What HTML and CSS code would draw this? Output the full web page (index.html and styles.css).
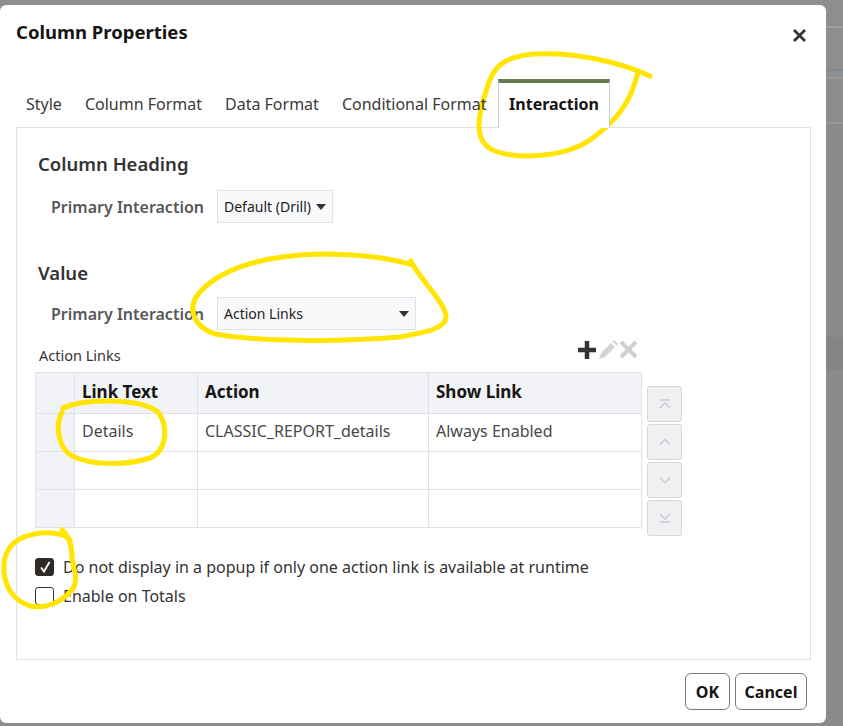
FILE: index.html
```html
<!DOCTYPE html>
<html>
<head>
<meta charset="utf-8">
<title>Column Properties</title>
<link rel="stylesheet" href="styles.css">
</head>
<body>
<div class="page">
  <div class="dialog">
    <div class="dlg-header">
      <h1 class="dlg-title">Column Properties</h1>
      <button class="close-btn" aria-label="Close">
        <svg width="13" height="13" viewBox="0 0 13 13"><path d="M1 1 L12 12 M12 1 L1 12" stroke="#333" stroke-width="2.8" fill="none"/></svg>
      </button>
    </div>

    <div class="tabs">
      <div class="tab">Style</div>
      <div class="tab">Column Format</div>
      <div class="tab">Data Format</div>
      <div class="tab">Conditional Format</div>
      <div class="tab active">Interaction</div>
    </div>

    <div class="panel">
      <h2 class="section-title">Column Heading</h2>
      <div class="field-row">
        <span class="field-label">Primary Interaction</span>
        <div class="select select-short"><span>Default (Drill)</span><span class="caret"></span></div>
      </div>

      <h2 class="section-title section-value">Value</h2>
      <div class="field-row field-row-value">
        <span class="field-label">Primary Interaction</span>
        <div class="select select-long"><span>Action Links</span><span class="caret"></span></div>
      </div>

      <div class="links-head">
        <span class="links-label">Action Links</span>
        <div class="toolbar">
          <svg width="22" height="20" viewBox="0 0 22 20"><path d="M11 1 V19 M2 10 H20" stroke="#333" stroke-width="4.5" fill="none"/></svg>
          <svg width="21" height="20" viewBox="0 0 21 20"><path d="M1 19 L3 13 L13 3 L17 7 L7 17 Z M14.5 1.5 L16 0 L20 4 L18.5 5.5 Z" fill="#d4d4d4"/></svg>
          <svg width="19" height="20" viewBox="0 0 19 20"><path d="M2 2 L17 17 M17 2 L2 17" stroke="#cfcfcf" stroke-width="4" fill="none"/></svg>
        </div>
      </div>

      <div class="links-body">
        <table class="links-table">
          <colgroup><col class="c-rh"><col class="c-text"><col class="c-action"><col class="c-show"></colgroup>
          <thead>
            <tr><th class="rh"></th><th>Link Text</th><th>Action</th><th>Show Link</th></tr>
          </thead>
          <tbody>
            <tr><td class="rh"></td><td>Details</td><td>CLASSIC_REPORT_details</td><td>Always Enabled</td></tr>
            <tr><td class="rh"></td><td></td><td></td><td></td></tr>
            <tr><td class="rh"></td><td></td><td></td><td></td></tr>
          </tbody>
        </table>
        <div class="order-btns">
          <button class="order-btn" aria-label="Move to top"><svg width="12" height="10" viewBox="0 0 12 10"><path d="M1 1 H11 M1 9 L6 4 L11 9" stroke="#c6cacf" stroke-width="1.3" fill="none"/></svg></button>
          <button class="order-btn" aria-label="Move up"><svg width="12" height="8" viewBox="0 0 12 8"><path d="M1 6.5 L6 1.5 L11 6.5" stroke="#c6cacf" stroke-width="1.3" fill="none"/></svg></button>
          <button class="order-btn" aria-label="Move down"><svg width="12" height="8" viewBox="0 0 12 8"><path d="M1 1.5 L6 6.5 L11 1.5" stroke="#c6cacf" stroke-width="1.3" fill="none"/></svg></button>
          <button class="order-btn" aria-label="Move to bottom"><svg width="12" height="10" viewBox="0 0 12 10"><path d="M1 1 L6 6 L11 1 M1 9 H11" stroke="#c6cacf" stroke-width="1.3" fill="none"/></svg></button>
        </div>
      </div>

      <div class="checks">
        <label class="check-row">
          <span class="cbox checked"><svg width="16" height="16" viewBox="0 0 16 16"><path d="M4 8.5 L7 12.5 L12.5 3" stroke="#fff" stroke-width="1.8" fill="none"/></svg></span>
          <span>Do not display in a popup if only one action link is available at runtime</span>
        </label>
        <label class="check-row">
          <span class="cbox"></span>
          <span>Enable on Totals</span>
        </label>
      </div>
    </div>

    <div class="dlg-footer">
      <button class="btn btn-ok">OK</button>
      <button class="btn btn-cancel">Cancel</button>
    </div>
  </div>
</div>

<svg class="annotations" viewBox="0 0 843 726" width="843" height="726">
  <g fill="none" stroke="#ffe500" stroke-width="5" stroke-linecap="round" stroke-linejoin="round">
    <path d="M650 76 C620 62 575 52 535 54 C505 56 493 66 487 88 C478 115 472 142 495 151 C520 160 565 157 590 140 C615 122 630 105 638 72"/>
    <path d="M411 261 L413 265 C425 285 447 305 446 318 C444 330 420 333 400 337 C340 342 260 342 215 334 C190 325 188 305 200 292 C220 270 260 256 320 254 C360 254 390 258 413 265"/>
    <path d="M63 408 C85 398 140 398 158 412 C168 425 168 450 150 458 C125 466 90 465 72 456 C58 448 55 425 62 412"/>
    <path d="M62 530 C70 537 72 548 72 558 C74 572 80 582 70 592 C60 603 45 609 30 606 C12 600 3 585 4 565 C5 545 18 536 40 533 C55 532 65 534 70 540"/>
  </g>
</svg>
</body>
</html>
```

FILE: styles.css
```css
* { box-sizing: border-box; }

html, body {
  margin: 0;
  height: 100%;
}

body {
  position: relative;
  overflow: hidden;
  font-family: "Noto Sans", "Open Sans", sans-serif;
  color: #333;
  background: linear-gradient(to bottom,
    #8e8e8e 0, #8e8e8e 26px, #a0a0a0 26px, #a0a0a0 28px,
    #8e8e8e 28px, #8e8e8e 69px, #7e8898 69px, #7e8898 71px,
    #8e8e8e 71px, #8e8e8e 77px, #9a9a9a 77px, #9a9a9a 79px,
    #8c8c8c 79px, #8c8c8c 122px, #999 122px, #999 124px,
    #8b8b8b 124px, #8b8b8b 337px, #858585 337px, #858585 370px,
    #8b8b8b 370px);
}

.page {
  padding-top: 5px;
}

.dialog {
  width: 826px;
  height: 718px;
  background: #fff;
  border-radius: 6px;
  padding: 0 15px 0 16px;
  display: flex;
  flex-direction: column;
}

/* header */
.dlg-header {
  height: 74px;
  display: flex;
  justify-content: space-between;
  align-items: flex-start;
  padding-top: 15px;
}

.dlg-title {
  margin: 0;
  font-size: 18.5px;
  line-height: 24px;
  font-weight: 700;
  color: #161513;
}

.close-btn {
  display: block;
  border: 0;
  background: none;
  padding: 0;
  margin: 9px 5px 0 0;
  width: 13px;
  height: 13px;
}
.close-btn svg { display: block; }

/* tabs */
.tabs {
  display: flex;
  height: 48px;
  margin-left: -1.5px;
  position: relative;
  z-index: 1;
}

.tab {
  padding: 10px 10.5px 12px;
  border-top: 4px solid transparent;
  border-left: 1px solid transparent;
  border-right: 1px solid transparent;
  font-size: 16px;
  line-height: 22px;
  color: #3a3a3a;
  white-space: nowrap;
}

.tab.active {
  height: 49px;
  margin-bottom: -1px;
  padding: 10px 10px 12px;
  background: #fff;
  border-top-color: #647c50;
  border-left-color: #c8ced4;
  border-right-color: #c8ced4;
  font-weight: 700;
  color: #161513;
}

/* panel */
.panel {
  border: 1px solid #e1e1e1;
  height: 533px;
  padding: 24px 20px 0 18px;
}

.section-title {
  margin: 0;
  padding-left: 3px;
  font-size: 18.5px;
  line-height: 24px;
  font-weight: 600;
  color: #333;
}

.section-value {
  margin-top: 38px;
}

.field-row {
  display: flex;
  align-items: center;
  margin-top: 14px;
  padding-left: 16px;
}
.field-row-value { margin-top: 12px; }

.field-label {
  width: 166px;
  flex: none;
  font-size: 16px;
  font-weight: 600;
  color: #575757;
  white-space: nowrap;
}

.select {
  height: 33px;
  flex: none;
  border: 1px solid #dde2e8;
  background: #f8f9fb;
  padding: 0 5px 0 6px;
  display: flex;
  align-items: center;
  justify-content: space-between;
  gap: 4px;
  font-size: 14px;
  color: #222;
  white-space: nowrap;
}
.select-short { width: 116px; }
.select-long { width: 199px; }

.caret {
  flex: none;
  width: 0;
  height: 0;
  border-left: 5px solid transparent;
  border-right: 5px solid transparent;
  border-top: 6px solid #333;
  margin-right: 1px;
}

/* action links */
.links-head {
  width: 606px;
  height: 24px;
  margin-top: 10px;
  display: flex;
  justify-content: space-between;
  align-items: flex-end;
}

.links-label {
  padding-left: 4px;
  font-size: 14.5px;
  line-height: 18px;
  color: #333;
}

.toolbar {
  align-self: flex-start;
  display: flex;
  padding-right: 3px;
}
.toolbar svg { display: block; }

.links-body {
  display: flex;
  align-items: flex-start;
  margin-top: 8px;
}

.links-table {
  border-collapse: collapse;
  table-layout: fixed;
  width: 606px;
  flex: none;
}
.c-rh { width: 39px; }
.c-text { width: 123px; }
.c-action { width: 231px; }
.c-show { width: 213px; }

.links-table th,
.links-table td {
  border: 1px solid #dfe3e8;
  padding: 0 7px 4px;
  text-align: left;
  white-space: nowrap;
}

.links-table th {
  height: 41px;
  background: #f1f3f7;
  font-size: 17px;
  font-weight: 700;
  color: #161513;
}

.links-table td {
  height: 38px;
  font-size: 16px;
  color: #484848;
}

.links-table .rh { background: #f1f3f7; }

.order-btns {
  display: flex;
  flex-direction: column;
  gap: 2px;
  margin: 14px 0 0 5px;
}

.order-btn {
  width: 35px;
  height: 36px;
  padding: 0;
  border: 1px solid #d4d8dc;
  border-radius: 3px;
  background: #eef0f2;
  display: flex;
  align-items: center;
  justify-content: center;
}

/* checks */
.checks {
  margin-top: 16px;
}

.check-row {
  display: flex;
  align-items: center;
  gap: 9px;
  height: 29px;
  font-size: 16px;
  color: #333;
}

.cbox {
  width: 19px;
  height: 18px;
  flex: none;
  border: 1.5px solid #333;
  border-radius: 3px;
  display: flex;
  align-items: center;
  justify-content: center;
}

.cbox.checked {
  background: #2f2b29;
  border-color: #2f2b29;
}

/* footer */
.dlg-footer {
  display: flex;
  justify-content: flex-end;
  gap: 5px;
  padding: 13px 4px 0 0;
}

.btn {
  height: 37px;
  border: 1px solid #7b7b7b;
  border-radius: 6px;
  background: #fff;
  font-family: "Noto Sans", "Open Sans", sans-serif;
  font-size: 16px;
  font-weight: 700;
  color: #161513;
  padding: 0;
}
.btn-ok { width: 45px; }
.btn-cancel { width: 72px; }

/* hand-drawn highlight markup over the screenshot */
.annotations {
  position: absolute;
  top: 0;
  left: 0;
  pointer-events: none;
}
```
